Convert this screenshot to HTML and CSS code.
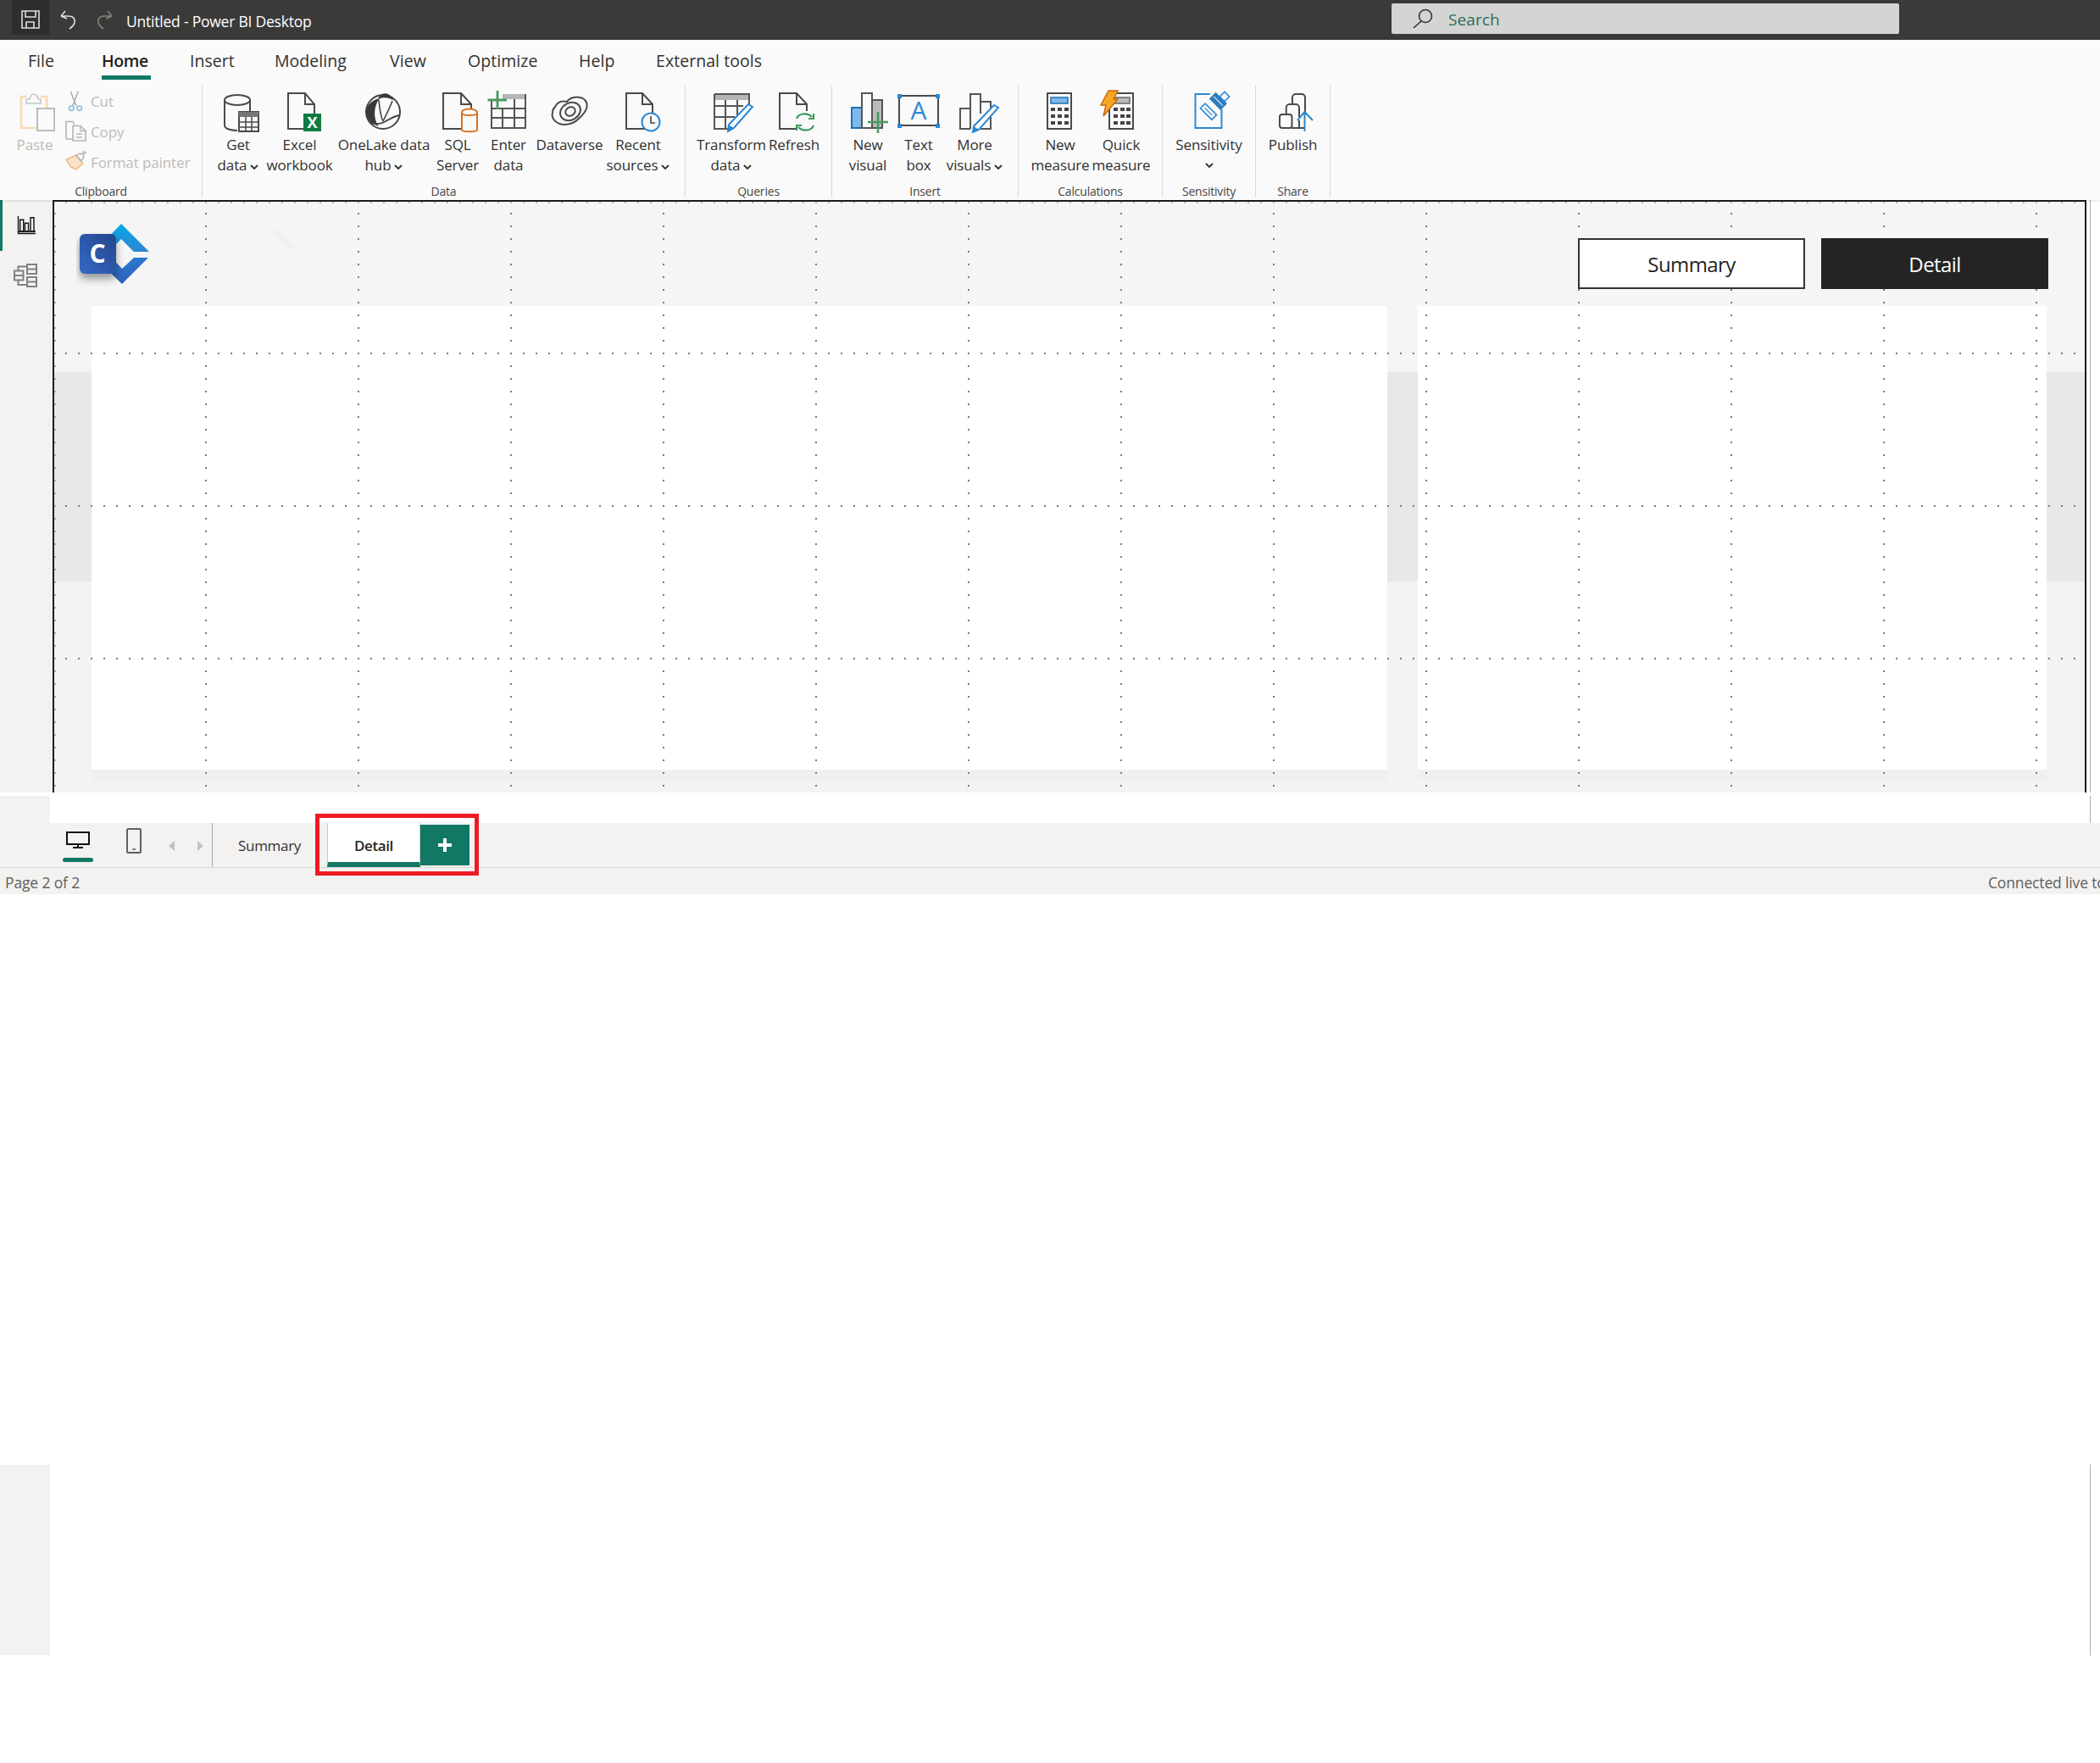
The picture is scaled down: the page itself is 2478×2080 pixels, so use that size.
FILE: index.html
```html
<!DOCTYPE html>
<html lang="en">
<head>
<meta charset="utf-8">
<title>Untitled - Power BI Desktop</title>
<link rel="stylesheet" href="styles.css">
</head>
<body>
<div class="app">
  <header class="titlebar">
    <div class="save-btn">
      <svg width="22" height="22" viewBox="0 0 22 22" class="tb-ic"><path d="M1 1h20v20H1z"/><path d="M5 1v7h12V1M6 21v-7h9v7"/></svg>
    </div>
    <svg class="undo" width="20" height="24" viewBox="0 0 20 24"><path class="tb-stroke" d="M2 8l5-6M2 8l7 3M2 8h9c6 0 8 4 7 8-1 3-3 5-6 7"/></svg>
    <svg class="redo" width="20" height="24" viewBox="0 0 20 24"><path class="tb-dim" d="M18 8l-5-6M18 8l-7 3M18 8H9c-6 0-8 4-7 8 1 3 3 5 6 7"/></svg>
    <span class="doc-title">Untitled - Power BI Desktop</span>
    <div class="search">
      <svg width="26" height="24" viewBox="0 0 26 24"><circle cx="16" cy="9" r="7.5" class="search-ic"/><path class="search-ic" d="M11 15L2 23"/></svg>
      <span>Search</span>
    </div>
  </header>

  <section class="ribbon">
    <nav class="tabs">
      <span class="tab t-file">File</span>
      <span class="tab t-home active">Home</span>
      <span class="tab t-insert">Insert</span>
      <span class="tab t-model">Modeling</span>
      <span class="tab t-view">View</span>
      <span class="tab t-opt">Optimize</span>
      <span class="tab t-help">Help</span>
      <span class="tab t-ext">External tools</span>
    </nav>
    <div class="groups">

      <div class="group g-clip">
        <div class="group-body">
          <div class="btn b-paste disabled">
            <svg class="slot" width="60" height="55" viewBox="0 0 60 55"><path fill="none" stroke="#f8d9b5" stroke-width="2.6" d="M20 10h-6v37h19"/><path fill="none" stroke="#f8d9b5" stroke-width="2.6" d="M37 10h7v14"/><path fill="#fafafa" stroke="#c4c4c4" stroke-width="1.6" d="M20 18v-5h4c1-4 3-6 5-6s4 2 5 6h3v5z"/><path fill="#fafafa" stroke="#bdbdbd" stroke-width="2" d="M33 24h20v26H33z"/></svg>
            <span class="lbl">Paste</span>
          </div>
          <div class="mini-list disabled">
            <div class="mini"><svg width="26" height="26" viewBox="0 0 26 26"><path fill="none" stroke="#a9a9a9" stroke-width="1.5" d="M15.3 2L8.7 19M6.3 2L13 19"/><circle cx="7.3" cy="21.7" r="2.7" fill="none" stroke="#8fbfe0" stroke-width="1.7"/><circle cx="16.7" cy="21.7" r="2.7" fill="none" stroke="#8fbfe0" stroke-width="1.7"/></svg><span>Cut</span></div>
            <div class="mini"><svg width="26" height="26" viewBox="0 0 26 26"><path fill="none" stroke="#b5b5b5" stroke-width="1.6" d="M9 22H1V1.5h8l2 4"/><path fill="#fafafa" stroke="#b5b5b5" stroke-width="1.6" d="M9 6.5h9l6 6V24H9z"/><path fill="none" stroke="#b5b5b5" stroke-width="1.3" d="M18 6.5v6h6M13 16h7M13 20h7"/></svg><span>Copy</span></div>
            <div class="mini"><svg width="26" height="26" viewBox="0 0 26 26"><path fill="#fbe3c8" stroke="#efb27a" stroke-width="1.3" d="M1.3 10.3L12 5.3l8.7 9.4L13 22l-6.7-3.3z"/><path fill="#fafafa" stroke="#b5b5b5" stroke-width="1.5" d="M13 5l6 7 3-5-1-2 3-3-2-1-3 3-2-1z"/></svg><span>Format painter</span></div>
          </div>
        </div>
        <div class="group-title">Clipboard</div>
      </div>

      <div class="group g-data">
        <div class="group-body">
          <div class="btn w72">
            <svg class="slot ic" width="60" height="55" viewBox="0 0 60 55"><ellipse cx="29" cy="14" rx="15" ry="6"/><path d="M14 14v30c0 4 8 6 15 6M44 14v13"/><path fill="#fafafa" d="M31 28h23v23H31z"/><path fill="#777" stroke="none" d="M31 28h23v6H31z"/><path stroke-width="1.5" d="M31 40h23M31 46h23M39 34v17M46 34v17"/></svg>
            <span class="lbl">Get</span><span class="lbl">data<svg class="chev" width="10" height="6" viewBox="0 0 10 6"><path d="M1 1l4 4 4-4"/></svg></span>
          </div>
          <div class="btn w73">
            <svg class="slot ic" width="60" height="55" viewBox="0 0 60 55"><path d="M16 6h20l11 13v29H16z"/><path d="M36 6v13h11"/><rect x="34" y="30" width="21" height="21" fill="#107c41" stroke="none"/><text x="44.5" y="47" class="xl">X</text></svg>
            <span class="lbl">Excel</span><span class="lbl">workbook</span>
          </div>
          <div class="btn w126">
            <svg class="slot ic" width="60" height="55" viewBox="0 0 60 55"><circle cx="29" cy="28" r="20" stroke="#444"/><path fill="#3a3a3a" stroke="none" d="M25 12C14 14 8 23 9 30c1 7 7 13 15 15-6-7-7-23 1-33z"/><path fill="#3a3a3a" stroke="none" d="M23 13c3-9 14-9 18 1-5-3-12-4-18-1z"/><path stroke="#444" stroke-width="1.6" d="M24 14c1 11 2 19 5 25M40 15c-3 8-7 16-11 24"/><path stroke="#444" stroke-width="2" d="M14 41c7 2 14 1 20-3 5-3 9-5 15-6"/></svg>
            <span class="lbl">OneLake data</span><span class="lbl">hub<svg class="chev" width="10" height="6" viewBox="0 0 10 6"><path d="M1 1l4 4 4-4"/></svg></span>
          </div>
          <div class="btn w48">
            <svg class="slot ic" width="60" height="55" viewBox="0 0 60 55"><path d="M13 6h21l12 13v29H13z"/><path d="M34 6v13h12"/><g stroke="#d9711d"><path fill="#fafafa" d="M35 29c0-6 18-6 18 0v20c0 3-18 3-18 0z"/><path d="M35 29c0 4 18 4 18 0"/></g></svg>
            <span class="lbl">SQL</span><span class="lbl">Server</span>
          </div>
          <div class="btn w72">
            <svg class="slot ic" width="60" height="55" viewBox="0 0 60 55"><path fill="#b5b5b5" stroke="none" d="M23 7h28v6H23z"/><path stroke="#555" d="M10 13v34h40V7M10 24h40M10 35h40M23 24v23M37 13v34"/><path stroke="#4a9a60" stroke-width="2.8" d="M5.5 14h22.5M17 3v22"/></svg>
            <span class="lbl">Enter</span><span class="lbl">data</span>
          </div>
          <div class="btn w72">
            <svg class="slot ic" width="60" height="55" viewBox="0 0 60 55"><path d="M13 22c3-6 9-7 14-6 3-5 11-6 15-5 7 1 10 7 8 13-2 6-6 9-9 12-5 5-11 7-17 7-9 0-16-7-14-14 0-3 1-5 3-7z"/><ellipse cx="31" cy="27.5" rx="12.5" ry="10" transform="rotate(-30 31 27.5)"/><ellipse cx="31" cy="27.5" rx="6" ry="5" transform="rotate(-30 31 27.5)"/></svg>
            <span class="lbl">Dataverse</span>
          </div>
          <div class="btn w90">
            <svg class="slot ic" width="60" height="55" viewBox="0 0 60 55"><path d="M16 6h19l12 13v29H16z"/><path d="M35 6v13h12"/><circle cx="45" cy="40" r="10.5" fill="#fafafa" stroke="#2b88d8"/><path stroke="#444" stroke-width="1.6" d="M45 33v8h5"/></svg>
            <span class="lbl">Recent</span><span class="lbl">sources<svg class="chev" width="10" height="6" viewBox="0 0 10 6"><path d="M1 1l4 4 4-4"/></svg></span>
          </div>
        </div>
        <div class="group-title">Data</div>
      </div>

      <div class="group g-query">
        <div class="group-body">
          <div class="btn w108">
            <svg class="slot ic" width="60" height="55" viewBox="0 0 60 55"><path fill="#b5b5b5" stroke="none" d="M10 7h41v7H10z"/><path stroke="#555" d="M10 7h41v20M10 7v41h20M10 21h34M10 34h24M23 14v34M37 14v20"/><path fill="#fafafa" stroke="#2b88d8" d="M50 19l5 3-22 25-7 4 1-8z"/><path fill="#2b88d8" stroke="none" d="M26 43l7 4-7 5z"/></svg>
            <span class="lbl">Transform</span><span class="lbl">data<svg class="chev" width="10" height="6" viewBox="0 0 10 6"><path d="M1 1l4 4 4-4"/></svg></span>
          </div>
          <div class="btn w40">
            <svg class="slot ic" width="60" height="55" viewBox="0 0 60 55"><path d="M32 48H13V6h20l12 13v8"/><path d="M33 6v13h12"/><g stroke="#3a9a5a" stroke-width="2.2"><path d="M33 36c2-6 12-8 18-2"/><path d="M53 30v6h-6"/><path d="M53 44c-2 6-12 8-18 2"/><path d="M33 50v-6h6"/></g></svg>
            <span class="lbl">Refresh</span>
          </div>
        </div>
        <div class="group-title">Queries</div>
      </div>

      <div class="group g-insert">
        <div class="group-body">
          <div class="btn w84">
            <svg class="slot ic" width="60" height="55" viewBox="0 0 60 55"><path fill="#7fb9ec" stroke="#1f6fb5" d="M11 23h12v24H11z"/><path fill="#fafafa" stroke="#555" d="M23 6h12v41H23z"/><path fill="#bbb" stroke="#555" d="M35 14h12v33H35z"/><path stroke="#4a9a60" stroke-width="2.6" d="M30 40h24M42 28v25"/></svg>
            <span class="lbl">New</span><span class="lbl">visual</span>
          </div>
          <div class="btn w36">
            <svg class="slot ic" width="60" height="55" viewBox="0 0 60 55"><rect x="7" y="9" width="46" height="35"/><g fill="#2b88d8" stroke="none"><rect x="5" y="7" width="5" height="5"/><rect x="50" y="7" width="5" height="5"/><rect x="5" y="42" width="5" height="5"/><rect x="50" y="42" width="5" height="5"/></g><text x="30" y="37" class="tb-a">A</text></svg>
            <span class="lbl">Text</span><span class="lbl">box</span>
          </div>
          <div class="btn w96">
            <svg class="slot ic" width="60" height="55" viewBox="0 0 60 55"><path stroke="#555" d="M25 48H13V24h12V7h12v9h12v32H37"/><path stroke="#555" d="M25 24v24M37 16v14"/><path fill="#fafafa" stroke="#2b88d8" d="M53 20l5 3-23 26-7 3 1-7z"/><path fill="#2b88d8" stroke="none" d="M29 45l6 4-7 3z"/></svg>
            <span class="lbl">More</span><span class="lbl">visuals<svg class="chev" width="10" height="6" viewBox="0 0 10 6"><path d="M1 1l4 4 4-4"/></svg></span>
          </div>
        </div>
        <div class="group-title">Insert</div>
      </div>

      <div class="group g-calc">
        <div class="group-body">
          <div class="btn w98">
            <svg class="slot ic" width="60" height="55" viewBox="0 0 60 55"><rect x="15" y="6" width="28" height="42"/><rect x="19" y="11" width="20" height="7" fill="#7fb9ec" stroke="#1f6fb5" stroke-width="1.5"/><path class="keys" d="M19 23h5v4h-5zM27 23h5v4h-5zM35 23h5v4h-5zM19 31h5v4h-5zM27 31h5v4h-5zM35 31h5v4h-5zM19 39h5v4h-5zM27 39h5v4h-5zM35 39h5v4h-5z"/></svg>
            <span class="lbl">New</span><span class="lbl">measure</span>
          </div>
          <div class="btn w46">
            <svg class="slot ic" width="60" height="55" viewBox="0 0 60 55"><rect x="16" y="6" width="28" height="42"/><rect x="22" y="11" width="18" height="7" fill="#bbb" stroke="#666" stroke-width="1.5"/><path class="keys" d="M21 23h5v4h-5zM29 23h5v4h-5zM36 23h5v4h-5zM21 31h5v4h-5zM29 31h5v4h-5zM36 31h5v4h-5zM21 39h5v4h-5zM29 39h5v4h-5zM36 39h5v4h-5z"/><path fill="#f7a823" stroke="#c8650b" stroke-width="1.4" d="M15 3h11l-5 10h5L9 33l3-13H6z"/></svg>
            <span class="lbl">Quick</span><span class="lbl">measure</span>
          </div>
        </div>
        <div class="group-title">Calculations</div>
      </div>

      <div class="group g-sens">
        <div class="group-body">
          <div class="btn wfull">
            <svg class="slot ic" width="60" height="55" viewBox="0 0 60 55"><path stroke="#2b88d8" d="M31 7H13.5v40h31V25"/><g transform="rotate(45 29 27.7)"><rect x="19.5" y="23.7" width="19" height="8" fill="#fafafa" stroke="#2b88d8" stroke-width="1.6"/><path stroke="#2b88d8" stroke-width="1.2" d="M23 27.7h12"/></g><g transform="rotate(45 40.7 15.3)"><rect x="31" y="10" width="19" height="11" fill="#2b7cc0" stroke="none"/><path stroke="#cfe6f8" stroke-width="1.2" d="M33 15.3h15"/></g><rect x="44" y="6" width="8" height="8" fill="#fafafa" stroke="#2b88d8" stroke-width="1.6" transform="rotate(45 48 10)"/></svg>
            <span class="lbl">Sensitivity</span><span class="lbl"><svg class="chev solo" width="10" height="6" viewBox="0 0 10 6"><path d="M1 1l4 4 4-4"/></svg></span>
          </div>
        </div>
        <div class="group-title">Sensitivity</div>
      </div>

      <div class="group g-share">
        <div class="group-body">
          <div class="btn wfull">
            <svg class="slot ic" width="60" height="55" viewBox="0 0 60 55"><rect x="14" y="31" width="14.5" height="16" rx="3"/><path d="M21.7 31v-8a4 4 0 0 1 4-4H33a4 4 0 0 1 4 4v11"/><path d="M29 19v-8a4 4 0 0 1 4-4h7a4 4 0 0 1 4 4v19"/><path d="M28 47h15M37 38v9"/><path stroke="#2b88c8" d="M43.5 51V28M35 38l8.5-10 9.5 10"/></svg>
            <span class="lbl">Publish</span>
          </div>
        </div>
        <div class="group-title">Share</div>
      </div>
    </div>
  </section>

  <main class="workspace">
    <aside class="rail">
      <div class="rail-report">
        <svg width="22" height="22" viewBox="0 0 22 22" class="rail-ic-dark"><path d="M1.5 0v20.5H22M1.5 18H22"/><path d="M3.7 4.3h4V18h-4zM9.5 8.3h4V18h-4zM16 1.7h4V18h-4z"/></svg>
      </div>
      <svg class="rail-model" width="30" height="30" viewBox="0 0 30 30"><g fill="none" stroke="#808080" stroke-width="2"><rect x="1" y="8.5" width="10.5" height="11"/><path d="M1 14h10.5"/><rect x="16" y="1" width="11" height="11"/><path d="M16 6.5h11"/><rect x="16" y="16" width="11" height="11"/><path d="M16 21.5h11M5.5 8.5v-5H16M5.5 19.5V25H16"/></g></svg>
    </aside>
    <div class="canvas">
      <div class="ghost"></div>
      <div class="panels">
        <div class="panel panel-main"></div>
        <div class="panel panel-side"></div>
      </div>
      <div class="dots"></div>
      <div class="canvas-head">
        <svg class="logo" width="90" height="80" viewBox="0 0 90 80">
          <defs>
            <linearGradient id="up" x1="0" y1="0" x2="0" y2="1"><stop offset="0" stop-color="#0aa8ea"/><stop offset="1" stop-color="#2a86d2"/></linearGradient>
            <linearGradient id="low" x1="0" y1="0" x2="0" y2="1"><stop offset="0" stop-color="#2b7ad2"/><stop offset="1" stop-color="#3160b8"/></linearGradient>
            <linearGradient id="sq" x1="0" y1="1" x2="1" y2="0"><stop offset="0" stop-color="#3369c6"/><stop offset="1" stop-color="#26458c"/></linearGradient>
          </defs>
          <path fill="url(#up)" d="M53 4l33 33H68L53 22 40 35 30 28z"/>
          <path fill="url(#low)" d="M85 44L54 75 30 52l10-10 14 15 14-13z"/>
          <rect class="logo-sq" x="4" y="16" width="43" height="47" rx="6" fill="url(#sq)"/>
          <text x="25" y="50" class="logo-c">C</text>
        </svg>
        <div class="seg">
          <div class="seg-btn seg-off">Summary</div>
          <div class="seg-btn seg-on">Detail</div>
        </div>
      </div>
    </div>
    <div class="gutter"></div>
  </main>

  <div class="band">
    <div class="stripe"></div>
    <div class="band-line"></div>
  </div>

  <footer class="bottom">
    <div class="pagebar">
      <div class="view-desk">
        <svg width="28" height="20" viewBox="0 0 28 20"><path fill="none" stroke="#111" stroke-width="2" d="M1 1h26v14H1zM14 15v4M8 19h12"/></svg>
        <div class="view-under"></div>
      </div>
      <svg class="view-phone" width="18" height="30" viewBox="0 0 18 30"><rect x="1" y="1" width="16" height="28" rx="1.5" fill="none" stroke="#605e5c" stroke-width="2"/><path d="M7 25h4" stroke="#605e5c" stroke-width="1.5"/></svg>
      <svg class="arrow arrow-l" width="7" height="12" viewBox="0 0 7 12"><path fill="#c4c2c0" d="M7 0v12L0 6z"/></svg>
      <svg class="arrow arrow-r" width="7" height="12" viewBox="0 0 7 12"><path fill="#c4c2c0" d="M0 0v12l7-6z"/></svg>
      <div class="page-sep"></div>
      <div class="page-summary">Summary</div>
      <div class="page-detail">Detail</div>
      <div class="page-add"><svg width="18" height="18" viewBox="0 0 18 18"><path d="M9 1v16M1 9h16" stroke="#fff" stroke-width="4"/></svg></div>
      <div class="redbox"></div>
    </div>
    <div class="status">
      <span>Page 2 of 2</span>
      <span class="status-right">Connected live to</span>
    </div>
  </footer>

  <div class="lower">
    <div class="lower-left"></div>
    <div class="lower-line"></div>
  </div>
</div>
</body>
</html>
```
FILE: styles.css
```css
* { box-sizing: border-box; }
html, body { margin: 0; padding: 0; background: #fff; }
body { font-family: "Open Sans", "Noto Sans", sans-serif; color: #252423; }
.app { width: 2478px; height: 2080px; overflow: hidden; }

/* title bar */
.titlebar { height: 47px; background: #3b3a39; display: flex; align-items: flex-start; }
.save-btn { width: 44px; height: 41px; margin-left: 14px; background: #2f2e2d; display: flex; align-items: center; justify-content: center; padding-top: 4px; }
.tb-ic path { fill: none; stroke: #e1dfdd; stroke-width: 1.6; }
.undo { margin: 11px 0 0 12px; }
.redo { margin: 11px 0 0 24px; }
.tb-stroke { fill: none; stroke: #e1dfdd; stroke-width: 1.6; }
.tb-dim { fill: none; stroke: #85837f; stroke-width: 1.6; }
.doc-title { margin-left: 15px; color: #fff; font-size: 17.5px; line-height: 50px; letter-spacing: -.22px; white-space: nowrap; }
.search { margin-left: auto; margin-right: 237px; margin-top: 4px; width: 599px; height: 36px; background: #d4d4d2; border-radius: 2px; display: flex; align-items: center; padding-left: 24px; color: #2b6d5e; font-size: 19px; letter-spacing: .1px; }
.search span { margin-left: 17px; position: relative; top: 1px; }
.search-ic { fill: none; stroke: #333; stroke-width: 1.6; }

/* ribbon */
.ribbon { height: 189px; background: #fafafa; position: relative; z-index: 3; box-shadow: 0 1px 3px rgba(0, 0, 0, .12); }
.tabs { height: 54px; display: flex; align-items: flex-start; }
.tab { font-size: 19.5px; line-height: 50px; letter-spacing: .05px; white-space: nowrap; height: 47px; color: #323130; }
.t-file { margin-left: 33px; width: 31px; }
.t-home { margin-left: 56px; width: 58px; font-weight: 600; color: #201f1e; border-bottom: 5px solid #117865; letter-spacing: -.35px; }
.t-insert { margin-left: 46px; width: 52px; }
.t-model { margin-left: 48px; width: 88px; }
.t-view { margin-left: 48px; width: 44px; }
.t-opt { margin-left: 48px; width: 83px; }
.t-help { margin-left: 48px; width: 42px; }
.t-ext { margin-left: 49px; }

.groups { display: flex; height: 132px; }
.group { display: flex; flex-direction: column; height: 132px; border-right: 1px solid #d8d8d8; }
.g-clip { width: 239px; }
.g-data { width: 570px; padding-left: 6px; }
.g-query { width: 173px; }
.g-insert { width: 220px; }
.g-calc { width: 170px; }
.g-sens { width: 110px; }
.g-share { width: 88px; }
.group-body { height: 115px; display: flex; padding-top: 3px; flex: none; }
.group-title { line-height: 20px; height: 17px; font-size: 14px; letter-spacing: -.2px; color: #484644; text-align: center; white-space: nowrap; }
.g-data .group-title { margin-left: -6px; }

.btn { display: flex; flex-direction: column; align-items: center; flex: none; }
.slot { display: block; flex: none; }
.lbl { font-size: 17px; line-height: 24px; letter-spacing: -.1px; color: #323130; white-space: nowrap; display: block; }
.w36 { width: 36px; } .w40 { width: 40px; } .w46 { width: 46px; } .w48 { width: 48px; }
.w72 { width: 72px; } .w73 { width: 73px; } .w84 { width: 84px; } .w90 { width: 90px; }
.w96 { width: 96px; } .w98 { width: 98px; } .w108 { width: 108px; } .w126 { width: 126px; }
.wfull { width: 100%; }
.chev { margin-left: 4px; vertical-align: 1px; }
.chev path { fill: none; stroke: #323130; stroke-width: 1.8; }
.chev.solo { margin-left: 0; vertical-align: 3px; }

.ic { fill: none; stroke: #4a4a4a; stroke-width: 2; }
.ic .keys { fill: #444; stroke: none; }
.ic text { stroke: none; font-family: "Open Sans", sans-serif; text-anchor: middle; }
.xl { fill: #fff; font-size: 18px; font-weight: 700; }
.tb-a { fill: #2b88d8; font-size: 30px; font-weight: 400; }

.b-paste { width: 70px; margin-left: 6px; }
.disabled .lbl, .mini span { color: #bdbbb9; }
.mini-list { display: flex; flex-direction: column; margin-top: -3px; }
.mini { height: 36px; display: flex; align-items: center; gap: 4px; margin-left: 1px; }
.mini span { font-size: 17px; letter-spacing: -.1px; white-space: nowrap; }

/* workspace */
.workspace { display: flex; height: 699px; }
.rail { width: 62px; background: #f3f2f1; display: flex; flex-direction: column; align-items: center; flex: none; }
.rail-report { width: 62px; height: 60px; border-left: 3px solid #117865; display: flex; justify-content: center; padding: 19px 3px 0 0; }
.rail-ic-dark { fill: none; stroke: #111; stroke-width: 1.4; }
.rail-model { margin-top: 15px; }
.canvas {
  width: 2400px; flex: none; position: relative;
  border: 2px solid #1c1c1c; border-bottom: 0;
  background: linear-gradient(to bottom, #f5f5f5 201px, #e8e8e8 201px, #e8e8e8 448px, #f3f3f3 448px);
}
.gutter { flex: 1; margin-left: 4px; border-left: 1px solid #b0b0b0; background: #fff; }
.canvas-head { height: 123px; padding: 22px 43px 0 26px; display: flex; justify-content: space-between; align-items: flex-start; position: absolute; left: 0; right: 0; top: 0; z-index: 2; }
.logo { display: block; }
.logo-sq { filter: drop-shadow(0 6px 5px rgba(0, 0, 0, .38)); }
.logo-c { fill: #fff; font-size: 30px; font-weight: 700; text-anchor: middle; font-family: "Open Sans", sans-serif; }
.seg { display: flex; gap: 19px; margin-top: 21px; }
.seg-btn { width: 268px; height: 60px; display: flex; align-items: center; justify-content: center; font-size: 24px; letter-spacing: -.6px; }
.seg-off { background: #fff; border: 2px solid #333; color: #252423; }
.seg-on { background: #252423; color: #fff; }
.panels { display: flex; gap: 36px; padding: 123px 0 0 44px; }
.panel { height: 547px; background: #fff; box-shadow: 0 14px 0 #f0f0f0; }
.panel-main { width: 1529px; }
.panel-side { width: 742px; }
.dots {
  position: absolute; inset: 0; pointer-events: none;
  background-image:
    radial-gradient(circle 1.4px at 1px 1px, #777 50%, transparent 100%),
    radial-gradient(circle 1.4px at 1px 1px, #777 50%, transparent 100%),
    radial-gradient(circle 1.3px at 1px 1px, #aaa 55%, transparent 100%),
    radial-gradient(circle 1.3px at 1px 1px, #bbb 55%, transparent 100%);
  background-size: 180px 15px, 15px 180px, 2px 15px, 15px 2px;
  background-position: 178px 13px, 13px 178px, 0 13px, 13px 0;
  background-repeat: repeat, repeat, repeat-y, repeat-x;
}
.ghost { position: absolute; left: 254px; top: 41px; width: 30px; height: 5px; background: #f0f0f0; transform: rotate(45deg); }

/* band under the canvas */
.band { height: 36px; display: flex; justify-content: space-between; }
.stripe { width: 59px; margin-top: 4px; background: #f3f2f1; }
.band-line { width: 1px; margin: 4px 11px 0 0; background: #b0b0b0; }

/* bottom */
.bottom { background: #f3f2f1; height: 84px; }
.pagebar { height: 53px; border-bottom: 1px solid #dcdad8; display: flex; align-items: flex-start; position: relative; }
.view-desk { margin-left: 74px; width: 36px; padding-top: 10px; display: flex; flex-direction: column; align-items: center; }
.view-desk svg { display: block; }
.view-under { width: 36px; height: 5px; margin-top: 11px; border-radius: 3px; background: #117865; }
.view-phone { margin: 6px 0 0 39px; }
.arrow { margin-top: 21px; }
.arrow-l { margin-left: 32px; }
.arrow-r { margin-left: 27px; }
.page-sep { width: 1px; height: 52px; margin-left: 10px; background: #a8a6a4; }
.page-summary { margin-left: 30px; width: 75px; font-size: 17px; letter-spacing: -.3px; line-height: 54px; white-space: nowrap; color: #323130; }
.page-detail { margin-left: 30px; width: 110px; height: 52px; background: #fff; border-left: 1px solid #c8c6c4; border-right: 1px solid #c8c6c4; border-bottom: 6px solid #117865; text-align: center; font-size: 17px; letter-spacing: -.4px; font-weight: 600; line-height: 54px; color: #252423; }
.page-add { width: 58px; height: 48px; margin-top: 2px; background: #117865; display: flex; align-items: center; justify-content: center; }
.redbox { position: absolute; left: 372px; top: -11px; width: 193px; height: 73px; border: 5px solid #ed1c24; }
.status { height: 31px; display: flex; justify-content: space-between; align-items: center; padding: 3px 0 0 6px; font-size: 17.5px; letter-spacing: -.15px; color: #605e5c; overflow: hidden; }
.status-right { width: 132px; white-space: nowrap; }

.lower { margin-top: 673px; height: 225px; display: flex; justify-content: space-between; }
.lower-left { width: 59px; background: #f3f2f1; }
.lower-line { width: 1px; margin-right: 11px; background: #b0b0b0; }
```
